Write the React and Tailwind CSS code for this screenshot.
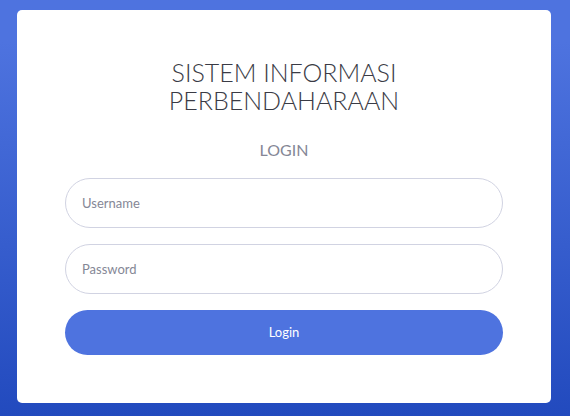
import React from "react";

export default function App() {
  return (
    <div className="min-h-[416px] w-full bg-gradient-to-b from-[#4e73df] from-10% to-[#224abe] pl-[17px] pr-[19px] pt-[10px] pb-[13px] font-['Lato','Noto_Sans',sans-serif]">
      <div className="rounded-[5px] bg-white px-[48px] pt-[48px] pb-[48px]">
        <h1 className="text-center text-[25px] leading-[28px] font-light text-[#3a3b45]">
          SISTEM INFORMASI
          <br />
          PERBENDAHARAAN
        </h1>
        <p className="mt-[24px] text-center text-[16px] leading-[24px] text-[#858796]">
          LOGIN
        </p>
        <form className="mt-[16px] flex flex-col gap-[16px]">
          <input
            type="text"
            placeholder="Username"
            className="h-[50px] w-full rounded-full border border-[#d1d3e2] px-[16px] text-[13px] text-[#6e707e] placeholder:text-[#858796] outline-none"
          />
          <input
            type="password"
            placeholder="Password"
            className="h-[50px] w-full rounded-full border border-[#d1d3e2] px-[16px] text-[13px] text-[#6e707e] placeholder:text-[#858796] outline-none"
          />
          <button
            type="submit"
            className="h-[45px] w-full rounded-full bg-[#4e73df] text-[13px] text-white"
          >
            Login
          </button>
        </form>
      </div>
    </div>
  );
}
